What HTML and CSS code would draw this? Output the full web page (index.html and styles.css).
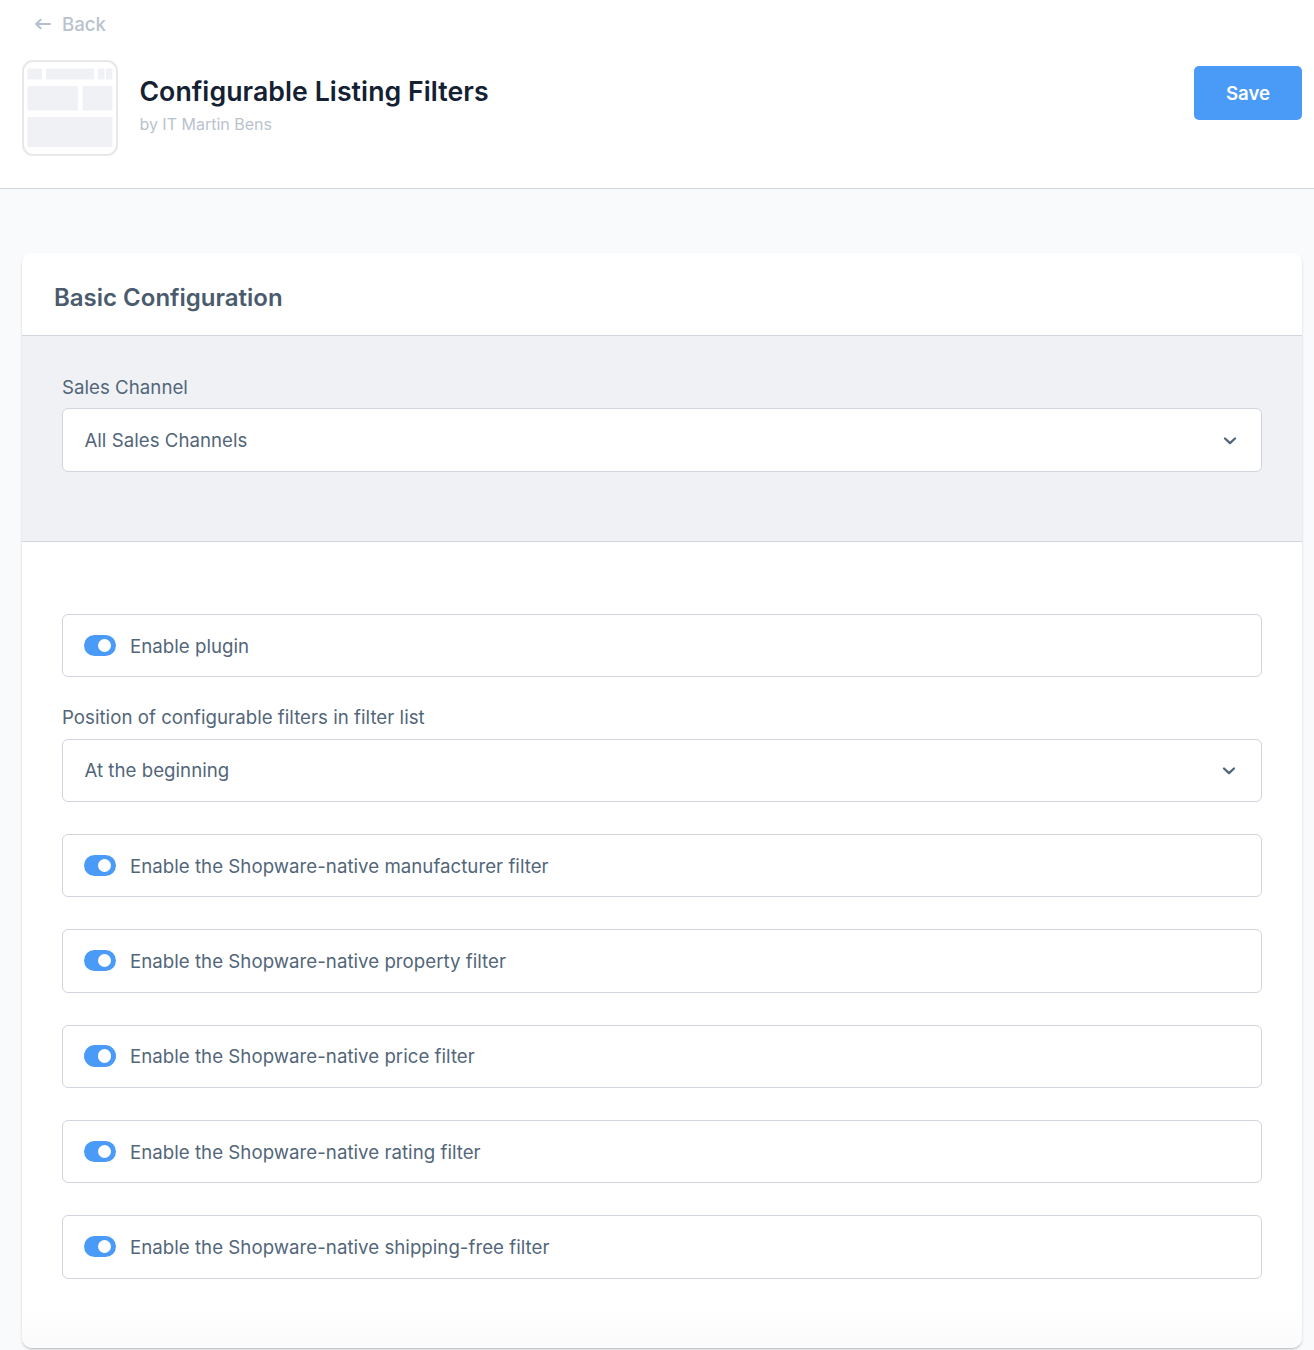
FILE: index.html
```html
<!DOCTYPE html>
<html lang="en">
<head>
<meta charset="utf-8">
<title>Configurable Listing Filters</title>
<link rel="stylesheet" href="styles.css">
</head>
<body>
<header class="page-header">
  <a class="back"><svg class="back-icon" width="16" height="12" viewBox="0 0 16 12"><path d="M15 6H1.2M5.6 1.7L1.2 6l4.4 4.3"/></svg><span>Back</span></a>
  <div class="plugin">
    <svg class="plugin-icon" width="96" height="96" viewBox="0 0 96 96">
      <rect class="frame" x="1" y="1" width="94" height="94" rx="10"/>
      <g class="blocks">
        <rect x="5.5" y="8.5" width="14.5" height="11" rx="1"/>
        <rect x="24" y="8.5" width="48" height="11" rx="1"/>
        <rect x="76" y="8.5" width="6.5" height="11" rx="1"/>
        <rect x="84" y="8.5" width="6.5" height="11" rx="1"/>
        <rect x="5.5" y="26" width="50.5" height="24.5" rx="1"/>
        <rect x="60.5" y="26" width="30" height="24.5" rx="1"/>
        <rect x="5.5" y="57" width="85" height="30" rx="1"/>
      </g>
    </svg>
    <div class="plugin-meta">
      <h1 class="plugin-name">Configurable Listing Filters</h1>
      <p class="plugin-author">by IT Martin Bens</p>
    </div>
    <button class="save">Save</button>
  </div>
</header>
<main class="content">
  <section class="card">
    <h2 class="card-title">Basic Configuration</h2>
    <div class="channel">
      <div class="label">Sales Channel</div>
      <div class="field select channel-select"><span>All Sales Channels</span><svg class="chevron" width="14" height="10" viewBox="0 0 14 10"><path d="M2 2.5l5 4.7 5-4.7"/></svg></div>
    </div>
    <div class="settings">
      <div class="field"><span class="toggle"></span><span>Enable plugin</span></div>
      <div class="setting">
        <div class="label">Position of configurable filters in filter list</div>
        <div class="field select"><span>At the beginning</span><svg class="chevron" width="14" height="10" viewBox="0 0 14 10"><path d="M2 2.5l5 4.7 5-4.7"/></svg></div>
      </div>
      <div class="field"><span class="toggle"></span><span>Enable the Shopware-native manufacturer filter</span></div>
      <div class="field"><span class="toggle"></span><span>Enable the Shopware-native property filter</span></div>
      <div class="field"><span class="toggle"></span><span>Enable the Shopware-native price filter</span></div>
      <div class="field"><span class="toggle"></span><span>Enable the Shopware-native rating filter</span></div>
      <div class="field"><span class="toggle"></span><span>Enable the Shopware-native shipping-free filter</span></div>
    </div>
  </section>
</main>
</body>
</html>
```
FILE: styles.css
```css
* {
  box-sizing: border-box;
}

body {
  margin: 0;
  height: 1350px;
  overflow: hidden;
  background: #f9fafb;
  font-family: Inter, "Liberation Sans", sans-serif;
  font-size: 18.67px;
  color: #52667a;
}

.page-header {
  height: 189px;
  padding: 12px 12px 0 22px;
  background: #fff;
  border-bottom: 1px solid #d1d9e0;
}

.back {
  display: flex;
  align-items: center;
  gap: 11px;
  height: 24px;
  padding-left: 13px;
  font-weight: 500;
  color: #b9c3ce;
}

.back-icon {
  fill: none;
  stroke: #b3bfcc;
  stroke-width: 2;
  stroke-linecap: round;
  stroke-linejoin: round;
}

.plugin {
  display: flex;
  align-items: flex-start;
  margin-top: 24px;
}

.frame {
  fill: #fff;
  stroke: #e8e8e8;
  stroke-width: 2;
}

.blocks {
  fill: #f0f1f5;
}

.plugin-meta {
  flex: 1;
  padding: 14px 0 0 21.4px;
}

.plugin-name {
  margin: 0;
  font-size: 26.67px;
  font-weight: 600;
  line-height: 34px;
  letter-spacing: 0.07px;
  color: #142133;
}

.plugin-author {
  margin: 5px 0 0;
  font-size: 16px;
  line-height: 22px;
  color: #b9c3ce;
}

.save {
  width: 108px;
  height: 54px;
  margin-top: 6px;
  padding: 0;
  border: 0;
  border-radius: 5px;
  background: #4a9af8;
  color: #fff;
  font: 600 18.67px Inter, "Liberation Sans", sans-serif;
}

.content {
  padding: 64px 12px 0 22px;
}

.card {
  height: 1095px;
  border-radius: 10px;
  background: linear-gradient(#fff 1050px, #fbfbfb);
  box-shadow: 0 1px 1px rgba(0, 0, 0, .12), 0 2px 3px rgba(0, 0, 0, .12);
}

.card-title {
  margin: 0;
  height: 82px;
  padding: 29px 32px 0;
  font-size: 24px;
  font-weight: 600;
  line-height: 32px;
  color: #4b5b6e;
}

.channel {
  height: 207px;
  padding: 40px 40px 0;
  border-top: 1px solid #d1d5dd;
  border-bottom: 1px solid #d1d5dd;
  background: #f0f1f5;
}

.label {
  height: 32.33px;
  line-height: 24px;
  letter-spacing: 0.03px;
}

.settings {
  display: flex;
  flex-direction: column;
  gap: 32px;
  padding: 72px 40px 0;
}

.setting {
  margin-top: -3px;
}

.field {
  display: flex;
  align-items: center;
  gap: 14px;
  height: 63.33px;
  padding: 1px 21px 0;
  border: 1px solid #d1d5dd;
  border-radius: 6px;
  background: #fff;
  letter-spacing: 0.03px;
}

.select {
  justify-content: space-between;
  padding: 0 25px 0 21.4px;
}

.channel-select {
  height: 64px;
  padding-right: 25px;
}

.chevron {
  margin-top: 1px;
  fill: none;
  stroke: #52667a;
  stroke-width: 2.3;
  stroke-linecap: round;
  stroke-linejoin: round;
}

.channel-select .chevron {
  margin-right: -1px;
}

.toggle {
  display: flex;
  align-items: center;
  justify-content: flex-end;
  width: 32px;
  height: 21.33px;
  margin-top: -1.4px;
  padding-right: 5px;
  border-radius: 11px;
  background: #4a9af8;
}

.toggle::after {
  content: "";
  width: 13.33px;
  height: 13.33px;
  border-radius: 50%;
  background: #fff;
}
```
